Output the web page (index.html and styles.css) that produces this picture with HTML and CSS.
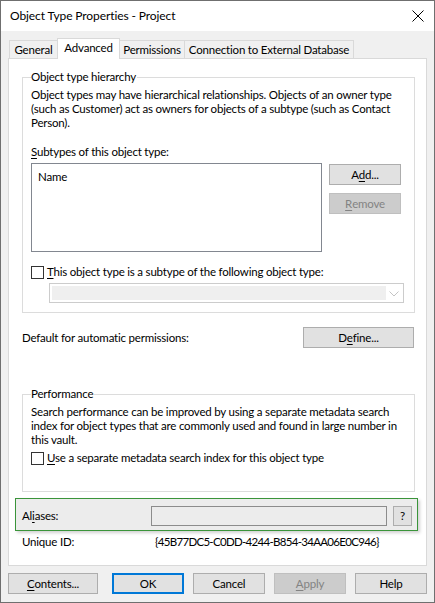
FILE: index.html
```html
<!DOCTYPE html>
<html>
<head>
<meta charset="utf-8">
<link rel="stylesheet" href="styles.css">
</head>
<body>
<div class="window">
  <div class="titlebar">
    <span class="title">Object Type Properties - Project</span>
    <svg class="close" width="12" height="12" viewBox="0 0 12 12"><path d="M0.5 0.5 L11.5 11.5 M11.5 0.5 L0.5 11.5" stroke="#000" stroke-width="1"/></svg>
  </div>
  <div class="client">
    <div class="tabs">
      <div class="tab tab-general">General</div>
      <div class="tab active tab-advanced">Advanced</div>
      <div class="tab tab-permissions">Permissions</div>
      <div class="tab tab-connection">Connection to External Database</div>
    </div>
    <div class="panel">
      <fieldset class="group hierarchy">
        <legend>Object type hierarchy</legend>
        <p class="desc">Object types may have hierarchical relationships. Objects of an owner type<br>(such as Customer) act as owners for objects of a subtype (such as Contact<br>Person).</p>
        <div class="line sub-label"><u>S</u>ubtypes of this object type:</div>
        <div class="list-row">
          <div class="listbox"><div class="list-head">Name</div></div>
          <div class="side-buttons">
            <div class="btn">A<u>d</u>d...</div>
            <div class="btn disabled"><u>R</u>emove</div>
          </div>
        </div>
        <div class="check subtype-check"><span class="box"></span><span><u>T</u>his object type is a subtype of the following object type:</span></div>
        <div class="combo"><div class="combo-field"></div><div class="combo-arrow"><svg width="10" height="6" viewBox="0 0 10 6"><path d="M0.5 0.5 L5 5 L9.5 0.5" fill="none" stroke="#c4c4c4" stroke-width="1"/></svg></div></div>
      </fieldset>
      <div class="perm-row">
        <span>Default for automatic permissions:</span>
        <div class="btn define">D<u>e</u>fine...</div>
      </div>
      <fieldset class="group perf">
        <legend>Performance</legend>
        <p class="desc">Search performance can be improved by using a separate metadata search<br>index for object types that are commonly used and found in large number in<br>this vault.</p>
        <div class="check perf-check"><span class="box"></span><span><u>U</u>se a separate metadata search index for this object type</span></div>
      </fieldset>
      <div class="aliases">
        <span class="alias-label">Al<u>i</u>ases:</span>
        <div class="alias-input"></div>
        <div class="btn help-q">?</div>
      </div>
      <div class="uid-row">
        <span class="uid-label">Unique ID:</span>
        <span class="uid-value">{45B77DC5-C0DD-4244-B854-34AA06E0C946}</span>
      </div>
    </div>
    <div class="footer">
      <div class="btn contents"><u>C</u>ontents...</div>
      <div class="footer-right">
        <div class="btn ok">OK</div>
        <div class="btn">Cancel</div>
        <div class="btn disabled"><u>A</u>pply</div>
        <div class="btn">Help</div>
      </div>
    </div>
  </div>
</div>
</body>
</html>
```

FILE: styles.css
```css
* { box-sizing: border-box; }
html, body { margin: 0; padding: 0; background: #f0f0f0; }
body {
  font-family: Lato, "Noto Sans", sans-serif;
  font-size: 11.5px;
  letter-spacing: -0.2px;
  color: #000;
}
u { text-decoration: underline; text-underline-offset: 2px; }
.window {
  width: 435px;
  height: 603px;
  border: 1px solid #6f6f6f;
  background: #f0f0f0;
  display: flex;
  flex-direction: column;
}
.titlebar {
  height: 30px;
  background: #fff;
  display: flex;
  align-items: center;
  justify-content: space-between;
  padding: 0 9px 1px 9px;
  flex: none;
}
.title { font-size: 12px; letter-spacing: -0.1px; line-height: 16px; }
.close { margin-right: 1px; }
.client {
  flex: 1;
  padding: 7px 7px 0 7px;
}
.tabs {
  display: flex;
  align-items: flex-end;
  height: 20px;
  padding-left: 1px;
}
.tab {
  height: 18px;
  line-height: 17px;
  border: 1px solid #d9d9d9;
  border-bottom: none;
  background: #f0f0f0;
  white-space: nowrap;
  text-align: center;
  margin-left: -1px;
}
.tab-general { width: 49px; margin-left: 0; }
.tab-advanced { width: 63px; }
.tab-permissions { width: 66px; }
.tab-connection { width: 170px; }
.tab.active {
  position: relative;
  z-index: 1;
  height: 21px;
  margin-bottom: -1px;
  background: #fff;
  line-height: 17px;
}
.panel {
  height: 508px;
  border: 1px solid #d9d9d9;
  background: #fff;
  display: flex;
  flex-direction: column;
}
.group {
  border: 1px solid #dcdcdc;
  margin: 0 11px 0 13px;
  padding: 0 8px;
  min-width: 0;
}
.group legend {
  padding: 0 1px 0 0;
  line-height: 14px;
  margin-left: 0;
}
.desc { margin: 0; line-height: 14px; white-space: nowrap; }
.hierarchy { margin-top: 11px; padding-bottom: 9px; }
.hierarchy .desc { padding-top: 4px; }
.line { line-height: 14px; }
.sub-label { margin-top: 15px; }
.list-row {
  display: flex;
  align-items: flex-start;
  margin-top: 4px;
}
.listbox {
  width: 291px;
  height: 89px;
  border: 1px solid #828790;
  background: #fff;
}
.list-head { padding: 6px 0 0 6px; line-height: 14px; }
.side-buttons {
  margin-left: 7px;
  margin-top: 1px;
  display: flex;
  flex-direction: column;
  gap: 8px;
}
.btn {
  height: 21px;
  width: 72px;
  border: 1px solid #adadad;
  background: #e1e1e1;
  display: flex;
  align-items: center;
  justify-content: center;
  line-height: 14px;
  white-space: nowrap;
}
.btn.disabled {
  background: #cccccc;
  border-color: #bfbfbf;
  color: #838383;
}
.check {
  display: flex;
  align-items: center;
  line-height: 14px;
}
.check .box {
  width: 13px;
  height: 13px;
  border: 1px solid #333;
  background: #fff;
  margin-right: 3px;
  flex: none;
}
.subtype-check { margin-top: 13px; }
.combo {
  margin: 4px 2px 0 18px;
  height: 20px;
  border: 1px solid #cccccc;
  background: #fff;
  display: flex;
  padding: 2px;
}
.combo-field { flex: 1; background: #efefef; }
.combo-arrow {
  width: 15px;
  display: flex;
  align-items: center;
  justify-content: center;
  padding-top: 1px;
}
.perm-row {
  margin: 14px 12px 0 13px;
  display: flex;
  align-items: center;
  justify-content: space-between;
}
.btn.define { width: 111px; }
.perf { margin-top: 39px; padding-bottom: 26px; }
.perf .desc { padding-top: 4px; }
.perf-check { margin-top: 4px; }
.aliases {
  margin: 6px 8px 0 6px;
  height: 33px;
  border: 1px solid #3a943a;
  background: #ececec;
  box-shadow: 2px 2px 3px rgba(0,0,0,0.18);
  display: flex;
  align-items: flex-start;
  padding: 7px 4px 0 6px;
}
.alias-label { line-height: 20px; width: 129px; }
.alias-input {
  width: 236px;
  height: 20px;
  border: 1px solid #8c8c8c;
  background: #ececec;
}
.btn.help-q { width: 19px; height: 20px; margin-left: 6px; }
.uid-row {
  margin: 4px 0 0 13px;
  display: flex;
  line-height: 14px;
}
.uid-label { width: 133px; }
.uid-value { letter-spacing: -0.7px; }
.footer {
  margin-top: 7px;
  display: flex;
  justify-content: space-between;
  padding-right: 0;
}
.btn.contents { width: 90px; }
.footer-right { display: flex; gap: 9px; }
.btn.ok { border: 2px solid #0078d7; width: 72px; }
```
